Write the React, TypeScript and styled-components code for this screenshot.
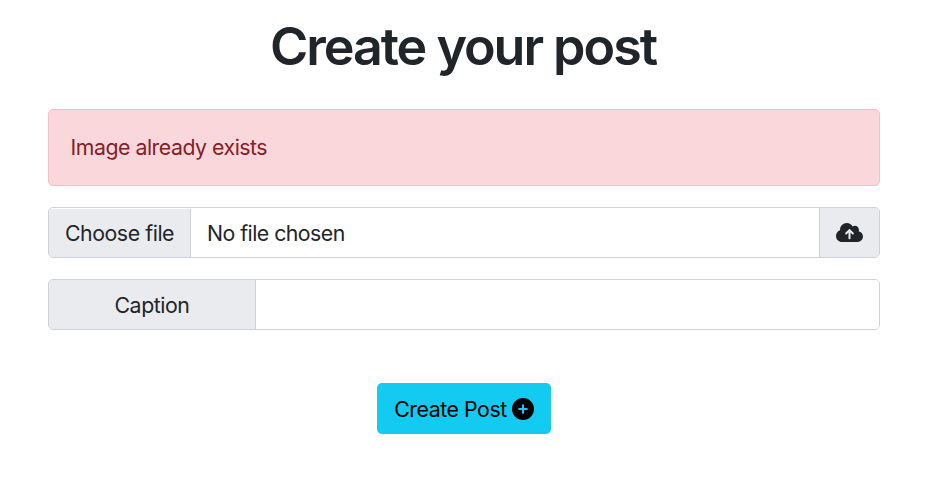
import React from "react";
import styled, { createGlobalStyle } from "styled-components";
import { FaCloudArrowUp, FaCirclePlus } from "react-icons/fa6";

const GlobalStyle = createGlobalStyle`
  * { box-sizing: border-box; }
  body { margin: 0; background: #fff; color: #212529; font-family: Inter, "Liberation Sans", sans-serif; font-size: 21.3px; line-height: 1.5; }
`;

const Page = styled.main`
  height: 486px;
  padding: 14px 58px 0 48px;
  overflow: hidden;
`;

const Title = styled.h1`
  margin: 0 0 31px;
  height: 64px;
  font-size: 52px;
  font-weight: 580;
  line-height: 65px;
  letter-spacing: -2.03px;
  text-indent: -2px;
  text-align: center;
  white-space: nowrap;
`;

const Alert = styled.div`
  height: 77px;
  padding: 22px 21px 20px 21.5px;
  margin-bottom: 21px;
  border: 1px solid #f3c1c7;
  border-radius: 5px;
  background: #f9d7da;
  color: #842029;
  letter-spacing: -0.48px;
`;

const InputGroup = styled.div`
  display: flex;
  height: 51px;
  margin-bottom: 21px;
  border: 1px solid #ced1d7;
  border-radius: 5px;
  overflow: hidden;
`;

const Addon = styled.label<{ $width: number; $end?: boolean; $inset?: boolean }>`
  flex: 0 0 ${(p) => p.$width}px;
  display: flex;
  align-items: center;
  justify-content: center;
  margin-top: ${(p) => (p.$inset ? 1 : 0)}px;
  padding-top: ${(p) => (p.$end ? 0 : p.$inset ? 1 : 2)}px;
  padding-bottom: ${(p) => (p.$end ? 1 : 0)}px;
  background: #e9ebef;
  border-${(p) => (p.$end ? "left" : "right")}: 1px solid #ced1d7;
  letter-spacing: -0.43px;
`;

const FileName = styled.span`
  flex: 1;
  padding: 10px 16px 7px;
  letter-spacing: -0.53px;
`;

const TextInput = styled.input`
  flex: 1;
  min-width: 0;
  border: 0;
  padding: 8px 16px;
  font: inherit;
  outline: none;
`;

const Actions = styled.div`
  display: flex;
  justify-content: center;
  padding-top: 32px;
`;

const SubmitButton = styled.button`
  display: flex;
  align-items: center;
  justify-content: center;
  gap: 5px;
  width: 174px;
  height: 51px;
  padding: 2px 0 0;
  border: 0;
  border-radius: 5px;
  background: #13caf0;
  color: #000;
  font: inherit;
  letter-spacing: -0.45px;
  white-space: nowrap;

  svg { flex: none; margin-bottom: 1px; }
`;

export default function App() {
  return (
    <>
      <GlobalStyle />
      <Page>
        <Title>Create your post</Title>
        <Alert>Image already exists</Alert>
        <InputGroup>
          <Addon $width={142} $inset>Choose file</Addon>
          <FileName>No file chosen</FileName>
          <Addon $width={60} $end><FaCloudArrowUp size={27} /></Addon>
        </InputGroup>
        <InputGroup>
          <Addon $width={207} htmlFor="caption">Caption</Addon>
          <TextInput id="caption" />
        </InputGroup>
        <Actions>
          <SubmitButton>Create Post <FaCirclePlus size={22} /></SubmitButton>
        </Actions>
      </Page>
    </>
  );
}
